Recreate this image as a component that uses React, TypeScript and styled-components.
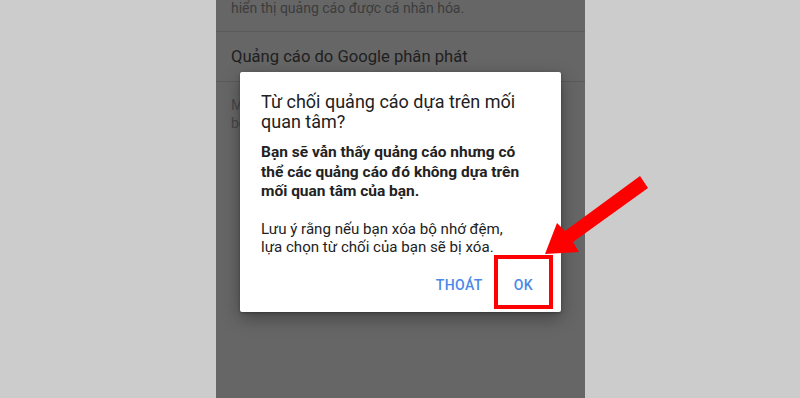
import React from "react";
import styled, { createGlobalStyle } from "styled-components";

const GlobalStyle = createGlobalStyle`
  html, body {
    margin: 0;
    padding: 0;
    background: #cccccc;
  }
  * {
    box-sizing: border-box;
  }
`;

const Page = styled.div`
  position: relative;
  width: 800px;
  height: 398px;
  display: flex;
  justify-content: center;
  overflow: hidden;
  font-family: Roboto, "Noto Sans", "Liberation Sans", sans-serif;
`;

const Phone = styled.div`
  position: relative;
  width: 369px;
  height: 100%;
  margin-left: 1px;
  background: #666666;
  overflow: hidden;
`;

const Summary = styled.div<{ $color: string }>`
  padding: 0 15px;
  font-size: 14px;
  line-height: 18px;
  color: ${(p) => p.$color};
  white-space: nowrap;
`;

const Section = styled.div<{ $height: number; $center?: boolean }>`
  height: ${(p) => p.$height}px;
  display: flex;
  flex-direction: column;
  justify-content: ${(p) => (p.$center ? "center" : "flex-start")};
  border-bottom: 1px solid #5b5b5b;
`;

const SectionTitle = styled.div`
  padding: 0 15px;
  font-size: 16.6px;
  line-height: 22px;
  color: #202020;
  white-space: nowrap;
`;

const Dialog = styled.div`
  position: absolute;
  left: 24px;
  top: 72px;
  width: 321px;
  height: 240px;
  background: #ffffff;
  border-radius: 2px;
  box-shadow: 0 6px 18px rgba(0, 0, 0, 0.35), 0 1px 3px rgba(0, 0, 0, 0.3);
  padding: 20px 20px 0 21px;
  display: flex;
  flex-direction: column;
`;

const Title = styled.div`
  font-size: 18px;
  line-height: 20px;
  color: #212121;
  white-space: nowrap;
`;

const Body = styled.p<{ $bold?: boolean; $gap: number }>`
  margin: ${(p) => p.$gap}px 0 0;
  font-size: ${(p) => (p.$bold ? "15.5px" : "15.1px")};
  line-height: ${(p) => (p.$bold ? "19.5px" : "18.5px")};
  font-weight: ${(p) => (p.$bold ? 700 : 400)};
  color: #222222;
  white-space: nowrap;
`;

const Actions = styled.div`
  margin-top: 10px;
  display: flex;
  justify-content: flex-end;
  gap: 15px;
`;

const ActionButton = styled.button`
  height: 36px;
  padding: 0 8px;
  border: none;
  background: transparent;
  font-family: inherit;
  font-size: 14px;
  font-weight: 500;
  letter-spacing: 0.4px;
  color: #4a89e8;
  cursor: pointer;
`;

const Highlight = styled.div`
  position: absolute;
  left: 494px;
  top: 255px;
  width: 59px;
  height: 54px;
  border: 4px solid #ff0000;
  pointer-events: none;
`;

const Arrow = styled.svg`
  position: absolute;
  left: 0;
  top: 0;
  pointer-events: none;
`;

export default function App() {
  return (
    <>
      <GlobalStyle />
      <Page>
        <Phone>
          <Section $height={32}>
            <Summary $color="#3c3c3c" style={{ marginTop: -1 }}>
              hiển thị quảng cáo được cá nhân hóa.
            </Summary>
          </Section>
          <Section $height={50} $center>
            <SectionTitle>Quảng cáo do Google phân phát</SectionTitle>
          </Section>
          <Summary $color="#464646" style={{ marginTop: 14 }}>
            Một số quảng cáo bạn thấy không do Google
            <br />
            bởi các nhà quảng cáo khác.
          </Summary>
          <Dialog>
            <Title>
              Từ chối quảng cáo dựa trên mối
              <br />
              quan tâm?
            </Title>
            <Body $bold $gap={11}>
              Bạn sẽ vẫn thấy quảng cáo nhưng có
              <br />
              thể các quảng cáo đó không dựa trên
              <br />
              mối quan tâm của bạn.
            </Body>
            <Body $gap={18}>
              Lưu ý rằng nếu bạn xóa bộ nhớ đệm,
              <br />
              lựa chọn từ chối của bạn sẽ bị xóa.
            </Body>
            <Actions>
              <ActionButton>THOÁT</ActionButton>
              <ActionButton>OK</ActionButton>
            </Actions>
          </Dialog>
        </Phone>
        <Highlight />
        <Arrow width="800" height="398" viewBox="0 0 800 398">
          <polygon
            points="545,254 557,223 565,231 640,176 648,188 573,242 579,252"
            fill="#ff0000"
          />
        </Arrow>
      </Page>
    </>
  );
}
